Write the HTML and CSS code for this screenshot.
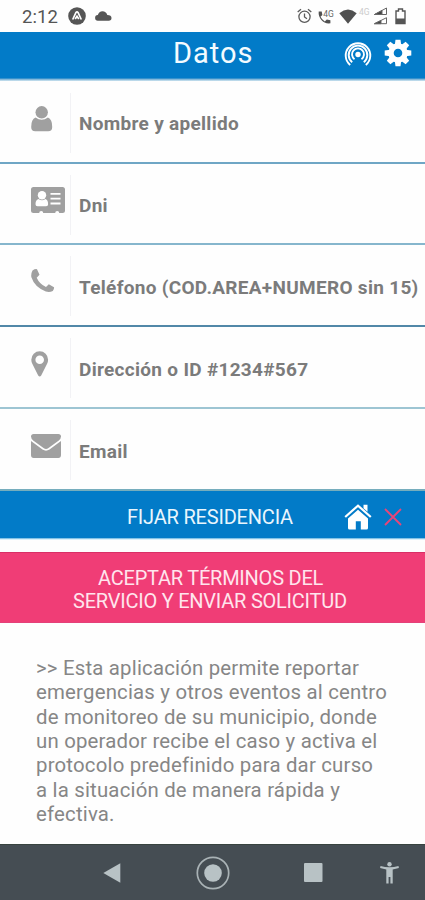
FILE: index.html
```html
<!DOCTYPE html>
<html lang="es">
<head>
<meta charset="utf-8">
<meta name="viewport" content="width=device-width, initial-scale=1">
<title>Datos</title>
<link rel="stylesheet" href="styles.css">
</head>
<body>
<div class="status">
  <span class="clock">2:12</span>
  <svg class="expo" width="18" height="18" viewBox="0 0 18 18"><circle cx="9" cy="9" r="8.800" fill="#555"/><path d="M4.700 12.500 8 5.500q1-1.300 2 0l3.300 7M7.200 12 9 9.200 10.800 12" fill="none" stroke="#fff" stroke-width="1.700"/></svg>
  <svg class="cloud" width="17" height="10" viewBox="0 0 17 10"><path d="M3 9.700a2.800 2.800 0 0 1-.2-5.600Q4 .3 7.500.3q3.500 0 4.800 3.700Q16.500 4.200 16.500 7q0 2.700-2.800 2.700Z" fill="#555"/></svg>
  <div class="signals">
    <svg width="15" height="16" viewBox="0 0 15 16" fill="none" stroke="#5a5a5a" stroke-width="1.300"><circle cx="7.500" cy="8.800" r="5.600"/><path d="M.7 4 4 1.200M14.300 4 11 1.200M7.500 5.500V9l2.500 1.700"/></svg>
    <svg class="call" width="17" height="17" viewBox="0 0 17 17"><path d="M.7 3.500h3l.7 3.500-1.900 1.700q1.500 3 4.300 4.700l2-2 3.600.9v3q-5.500.8-9-3.300Q.2 8.200.7 3.500Z" fill="#505050"/><text x="5.300" y="8.500" class="net">4G</text></svg>
    <svg class="wifi" width="18" height="15" viewBox="0 0 18 15"><path d="M.3 4.200Q9-3 17.700 4.200L9 14.700Z" fill="#505050"/></svg>
    <span class="net-off">4G</span>
    <svg class="bars" width="15" height="18" viewBox="0 0 15 18" fill="none" stroke="#666"><path d="M1.500 7.500 13.500 1v6.500ZM1.500 16.700l12-6v6Z"/><path d="M1.500 7.500 9 3.500v4ZM1.500 16.700 8 13.500v3.200Z" fill="#444"/></svg>
    <svg class="battery" width="11" height="17" viewBox="0 0 11 17"><path d="M1 3h2.500V1h4v2H10v12.500H1Z" fill="none" stroke="#555" stroke-width="1.400"/><path d="M1 10.500h9v5H1z" fill="#555"/></svg>
  </div>
</div>

<header class="header">
  <h1 class="title">Datos</h1>
  <svg class="cast" width="28" height="28" viewBox="0 0 28 28" fill="none" stroke="#fff" stroke-width="2.200"><circle cx="14" cy="14.500" r="2.700" fill="#fff" stroke="none"/><path d="M10.500 19.200a6 6 0 1 1 7 0M8.200 22.200a9.300 9.300 0 1 1 11.600 0M6.200 25a12.300 12.300 0 1 1 15.600 0" stroke-width="1.900"/></svg>
  <svg class="gear" width="28" height="28" viewBox="0 0 28 28"><g fill="#fff"><path id="tooth" d="M10.800 6 11.500.7h5l.7 5.300Z"/><use href="#tooth" transform="rotate(45 14 14)"/><use href="#tooth" transform="rotate(90 14 14)"/><use href="#tooth" transform="rotate(135 14 14)"/><use href="#tooth" transform="rotate(180 14 14)"/><use href="#tooth" transform="rotate(225 14 14)"/><use href="#tooth" transform="rotate(270 14 14)"/><use href="#tooth" transform="rotate(315 14 14)"/></g><circle cx="14" cy="14" r="7" fill="none" stroke="#fff" stroke-width="5.400"/></svg>
</header>

<main>
  <div class="field first">
    <div class="icon"><svg width="22" height="26" viewBox="0 0 22 26" fill="#a0a0a0"><circle cx="10.700" cy="6.300" r="6.200"/><path d="M4.500 11.500q6.200 4.500 12.400 0Q21.300 13 21.200 21q0 4.300-4 4.300H4.200q-4 0-4-4.300Q.2 13 4.500 11.500Z"/></svg></div>
    <span class="label">Nombre y apellido</span>
  </div>
  <div class="field second">
    <div class="icon"><svg width="34" height="26" viewBox="0 0 34 26"><path d="M2.500 0h29Q34 0 34 2.500v21q0 2.500-2.500 2.500h-3.300a2 2 0 0 0-4 0h-12a2 2 0 0 0-4 0H2.500Q0 26 0 23.500v-21Q0 0 2.500 0Z" fill="#a0a0a0"/><circle cx="11" cy="8.300" r="4.200" fill="#fff"/><path d="M7.500 12q3.500 2.500 7 0 2.600 1 2.600 5.300 0 2-2 2H6.500q-2 0-2-2Q4.500 13 7.500 12ZM19.500 6h10v1.800h-10zM19.500 10.800h10v1.800h-10zM19.500 15.600h10v1.800h-10z" fill="#fff"/></svg></div>
    <span class="label">Dni</span>
  </div>
  <div class="field third">
    <div class="icon"><svg width="24" height="24" viewBox="0 0 24 24"><path d="M1.500 1.500Q4-.2 6 .2L8.500 5.800 5.700 8.700Q8.500 15 15 18l2.800-2.700 5.200 2.900q.4 1.200-1.200 3.900-3.400 1.700-7 .5Q3.500 18 .4 8.300-.3 5 1.500 1.500Z" fill="#a0a0a0"/></svg></div>
    <span class="label">Teléfono (COD.AREA+NUMERO sin 15)</span>
  </div>
  <div class="field fourth">
    <div class="icon"><svg width="18" height="26" viewBox="0 0 18 26"><path fill-rule="evenodd" d="M8.700.3a8.400 8.400 0 0 1 8.400 8.400q0 2-1 4l-5.900 11.800q-1.500 1.900-3 0L1.300 12.700q-1-2-1-4A8.400 8.400 0 0 1 8.700.3Zm0 4.100a4.300 4.300 0 1 0 0 8.600 4.300 4.300 0 0 0 0-8.600Z" fill="#a0a0a0"/></svg></div>
    <span class="label">Dirección o ID #1234#567</span>
  </div>
  <div class="field fifth">
    <div class="icon"><svg width="30" height="24" viewBox="0 0 30 24" fill="#a0a0a0"><path d="M2.700 0h24.600Q30 0 30 2.500q0 2.400-2.500 4.300l-10 7.300q-2.500 1.700-5 0L2.500 6.800Q0 4.900 0 2.500 0 0 2.700 0Z"/><path d="m0 7 11.500 8.600q3.500 2.300 7 0L30 7v14q0 2.900-2.700 2.900H2.700Q0 23.900 0 21Z"/></svg></div>
    <span class="label">Email</span>
  </div>

  <div class="residence">
    <span class="residence-text">FIJAR RESIDENCIA</span>
    <svg class="home" width="28" height="28" viewBox="0 0 28 28"><path d="M4 15.500 14 6.800l10 8.700V25q0 1.500-1.500 1.500h-5.700v-8.300h-5v8.300H5.500Q4 26.500 4 25Z" fill="#fff"/><path d="M19.500 1.800h4v7l-4-3.500Z" fill="#fff"/><path d="M1.200 14 14 2.600 26.800 14" fill="none" stroke="#fff" stroke-width="2.200"/></svg>
    <svg class="cross" width="18" height="18" viewBox="0 0 18 18"><path d="m1 1 16 16M17 1 1 17" stroke="#e94578" stroke-width="1.800"/></svg>
  </div>

  <div class="accept"><span class="accept-one">ACEPTAR TÉRMINOS DEL</span><span class="accept-two">SERVICIO Y ENVIAR SOLICITUD</span></div>

  <p class="about">&gt;&gt; Esta aplicación permite reportar<br>emergencias y otros eventos al centro<br>de monitoreo de su municipio, donde<br>un operador recibe el caso y activa el<br>protocolo predefinido para dar curso<br>a la situación de manera rápida y<br>efectiva.</p>
</main>

<nav class="nav">
  <svg class="back" width="18" height="20" viewBox="0 0 18 20"><path d="M.3 10 17.300.3v19.400Z" fill="#b8c2c5"/></svg>
  <svg class="circle" width="34" height="34" viewBox="0 0 34 34"><circle cx="17" cy="17" r="15.700" fill="none" stroke="#a9b2b5" stroke-width="1.700"/><circle cx="17" cy="17" r="8.800" fill="#b8c2c5"/></svg>
  <svg class="square" width="19" height="19" viewBox="0 0 19 19"><rect width="18.500" height="19" rx="1" fill="#b8c2c5"/></svg>
  <svg class="person" width="19" height="22" viewBox="0 0 19 22" fill="#b8c2c5"><circle cx="9.500" cy="2.300" r="2.200"/><path d="M.5 4q9 2.500 18 0l.4 2.100-6.200 1.300v14.100h-2.300V15H8.600v6.500H6.300V7.400L.1 6.100Z"/></svg>
</nav>
</body>
</html>
```
FILE: styles.css
```css
* { box-sizing: border-box; }

body {
  margin: 0;
  width: 425px;
  height: 900px;
  overflow: hidden;
  display: flex;
  flex-direction: column;
  background: #fefefe;
  font-family: Roboto, "Liberation Sans", sans-serif;
}

svg { display: block; flex: none; }

.status { display: flex; align-items: center; height: 32px; padding-left: 22px; color: #555; }
.clock { width: 37px; font-size: 18.500px; line-height: 32px; letter-spacing: .1px; padding-top: 2px; }
.expo { margin-left: 9px; }
.cloud { margin-left: 9px; }
.signals { display: flex; align-items: center; margin-left: auto; padding-right: 19px; }
.call { margin-left: 6px; }
.net { font-size: 8.500px; fill: #666; }
.wifi { margin-left: 4px; }
.net-off { width: 12px; margin-left: 2px; font-size: 8.500px; color: #ccc; margin-top: -8px; }
.bars { margin-left: 2px; }
.battery { margin-left: 7px; }

.header {
  display: grid;
  grid-template-columns: 344px 41px 40px;
  height: 49px;
  align-items: start;
  background: linear-gradient(#027bc8 0 46px, #6aa9d2 47px, #d5e8f2 49px);
}
.title { margin: 0; padding-left: 173px; color: #f4fbff; font-size: 29px; line-height: 43px; font-weight: 400; letter-spacing: 1px; }
.cast { margin-top: 8px; }
.gear { margin: 7px 0 0 -1px; }

.field { display: flex; height: 82px; border-bottom: 2px solid #6fa6c5; }
.first { height: 83px; padding-top: 1px; }
.second { height: 81px; border-color: #86b6cd; }
.third { border-color: #5288a8; }
.fourth { border-color: #9dc5d3; }
.fifth { border-color: #76adbd; }
.icon { width: 71px; height: 60px; margin-top: 11px; padding: 13px 0 0 31px; border-right: 1px solid #f2f2f5; }
.second .icon { padding-top: 12px; }
.fifth .icon { padding-top: 14px; }
.label { padding: 31px 0 0 8px; color: #7b7b7b; font-size: 19px; line-height: 24px; font-weight: 700; letter-spacing: .3px; white-space: nowrap; }
.first .label,
.second .label { padding-top: 30px; }

.residence {
  display: grid;
  grid-template-columns: 343.500px 40.500px 41px;
  height: 49px;
  background: linear-gradient(#027bc8 0 46.500px, #c4e6f6 48px, #effaff 49px);
}
.residence-text { padding-left: 127px; color: #e9f6fd; font-size: 20px; line-height: 52px; letter-spacing: -.2px; }
.home { margin-top: 12px; }
.cross { margin-top: 17px; }

.accept {
  display: flex;
  flex-direction: column;
  height: 71px;
  margin-top: 12px;
  padding-top: 14px;
  border-top: 1px solid #d92f66;
  border-bottom: 1px solid #e4417a;
  background: #f03d76;
  color: #ffe5ed;
  font-size: 20px;
  line-height: 23px;
  letter-spacing: -.23px;
  white-space: nowrap;
}
.accept-one { padding-left: 98px; }
.accept-two { padding-left: 73px; }

.about { margin: 33px 0 0 36px; color: #868686; font-size: 20.400px; line-height: 24.330px; letter-spacing: .19px; white-space: nowrap; }

.nav {
  display: grid;
  grid-template-columns: 103px 93px 108px 76px 45px;
  align-items: center;
  height: 56px;
  margin-top: auto;
  border-top: 1px solid #38433f;
  background: #454d53;
}
.back { grid-column: 2; }
```
